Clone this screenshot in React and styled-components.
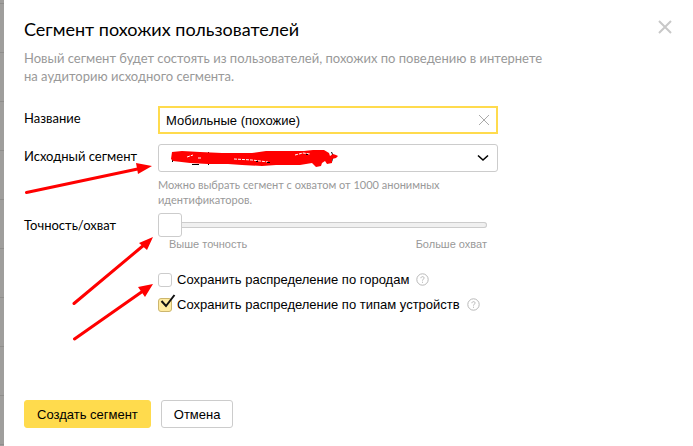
import React, { useState } from 'react';
import styled, { createGlobalStyle } from 'styled-components';

const GlobalStyle = createGlobalStyle`
  * {
    box-sizing: border-box;
  }

  body {
    margin: 0;
    background: #fff;
    color: #000;
    font-family: Lato, 'Noto Sans', sans-serif;
    font-size: 13px;
  }

  button, input, select {
    font-family: 'Liberation Sans', Arial, sans-serif;
    font-size: 13px;
    color: #000;
  }
`;

const Page = styled.div`
  position: relative;
  display: flex;
  min-height: 100vh;
`;

const Backdrop = styled.div`
  flex: 0 0 4px;
  background: repeating-linear-gradient(
    #9f9e9c 0, #9f9e9c 3px, #8f8e8c 3px, #8f8e8c 4px, #9f9e9c 4px, #9f9e9c 49px
  );
`;

const Dialog = styled.main`
  flex: 1;
  min-width: 0;
  display: flex;
  flex-direction: column;
  padding: 16px 21px 18px 20px;
`;

const Header = styled.header`
  display: flex;
  justify-content: space-between;
  align-items: flex-start;
`;

const Title = styled.h1`
  margin: 0;
  font-size: 18px;
  line-height: 26px;
  font-weight: 400;
`;

const IconButton = styled.button`
  display: flex;
  padding: 0;
  border: none;
  background: transparent;
  color: ${props => props.$color};
  cursor: pointer;
`;

const CloseButton = styled(IconButton)`
  margin: 4px 0 0;
`;

const Description = styled.p`
  max-width: 530px;
  margin: 7px 0 0;
  line-height: 18px;
  color: #999;
`;

const Form = styled.form`
  flex: 1;
  display: flex;
  flex-direction: column;
`;

const Fields = styled.div`
  display: grid;
  grid-template-columns: 134px minmax(0, 340px);
  margin-top: 21px;
`;

const Label = styled.label`
  line-height: 24px;
`;

const Field = styled.div`
  position: relative;
  margin-bottom: ${props => props.$gap}px;
`;

const InputBox = styled.div`
  display: flex;
  align-items: center;
  height: 28px;
  padding: 0 6px;
  border: 2px solid #ffdb4d;
`;

const TextInput = styled.input`
  flex: 1;
  min-width: 0;
  padding: 0;
  border: none;
  outline: none;
  background: transparent;
`;

const SelectBox = styled.div`
  position: relative;
`;

const Select = styled.select`
  display: block;
  width: 100%;
  height: 28px;
  padding: 0 30px 0 12px;
  border: 1px solid #ccc;
  border-radius: 3px;
  background: #fff;
  appearance: none;
`;

const SelectArrow = styled.svg`
  position: absolute;
  top: 10px;
  right: 9px;
  pointer-events: none;
`;

const Scribble = styled.svg`
  position: absolute;
  top: 6px;
  left: 12px;
  pointer-events: none;
`;

const Hint = styled.p`
  margin: 5px 0 0;
  font-size: 11px;
  line-height: 15px;
  color: #999;
`;

const Slider = styled.input`
  display: block;
  width: 100%;
  max-width: 329px;
  height: 24px;
  margin: 0;
  appearance: none;
  background: transparent;

  &::-webkit-slider-runnable-track {
    height: 6px;
    border-radius: 3px;
    background: #f0f0f0;
    box-shadow: inset 0 0 0 1px #ccc;
  }

  &::-webkit-slider-thumb {
    width: 24px;
    height: 24px;
    margin-top: -9px;
    border: 1px solid #ccc;
    border-radius: 3px;
    background: #fff;
    appearance: none;
  }
`;

const SliderCaptions = styled.div`
  display: flex;
  justify-content: space-between;
  max-width: 329px;
  padding-left: 11px;
  font-family: 'Liberation Sans', Arial, sans-serif;
  font-size: 11px;
  line-height: 14px;
  color: #999;
`;

const Options = styled.div`
  grid-column: 2;
  display: flex;
  flex-direction: column;
  font-family: 'Liberation Sans', Arial, sans-serif;
`;

const Option = styled.div`
  display: flex;
  align-items: center;
  height: 25px;
  white-space: nowrap;
`;

const CheckLabel = styled.label`
  position: relative;
  display: flex;
  align-items: center;
  gap: 5px;
  margin-right: 7px;
`;

const Checkbox = styled.input`
  width: 14px;
  height: 14px;
  margin: 0;
  border: 1px solid #ccc;
  border-radius: 3px;
  background: #fff;
  appearance: none;

  &:checked {
    border-color: #ccb66e;
    background: #ffeba0;
  }
`;

const CheckMark = styled.svg`
  position: absolute;
  top: -3px;
  left: 2px;
  pointer-events: none;
`;

const Footer = styled.footer`
  display: flex;
  gap: 10px;
  margin-top: auto;
`;

const Button = styled.button`
  height: 28px;
  padding: 0 12px;
  border: 1px solid ${props => (props.$primary ? '#ffdb4d' : '#ccc')};
  border-radius: 3px;
  background: ${props => (props.$primary ? '#ffdb4d' : '#fff')};
  cursor: pointer;
`;

const Arrows = styled.svg`
  position: absolute;
  top: 0;
  left: 0;
  pointer-events: none;
`;

function Cross({ size, width }) {
  return (
    <svg width={size} height={size} viewBox={`0 0 ${size} ${size}`} fill='none' stroke='currentColor' strokeWidth={width}>
      <path d={`M1 1L${size - 1} ${size - 1}M${size - 1} 1L1 ${size - 1}`} />
    </svg>
  );
}

function Help() {
  return (
    <IconButton type='button' aria-label='Справка' $color='#b8b8b8'>
      <svg width='13' height='13' viewBox='0 0 13 13' fill='none' stroke='currentColor'>
        <circle cx='6.5' cy='6.5' r='5.7' />
        <path d='M4.9 5.2C4.9 3.1 8.2 3.2 8.1 5.1C8 6.2 6.5 6.2 6.5 7.6M6.5 8.7V9.8' />
      </svg>
    </IconButton>
  );
}

function CheckOption({ checked, onChange, children }) {
  return (
    <Option>
      <CheckLabel>
        <Checkbox type='checkbox' checked={checked} onChange={e => onChange(e.target.checked)} />
        {checked && (
          <CheckMark width='16' height='15' viewBox='0 0 16 15' fill='none' stroke='#111' strokeWidth='2'>
            <path d='M1.5 7L6 12L14.5 1' />
          </CheckMark>
        )}
        {children}
      </CheckLabel>
      <Help />
    </Option>
  );
}

function App() {
  const [name, setName] = useState('Мобильные (похожие)');
  const [accuracy, setAccuracy] = useState(0);
  const [byCity, setByCity] = useState(false);
  const [byDevice, setByDevice] = useState(true);

  return (
    <Page>
      <GlobalStyle />
      <Backdrop />

      <Dialog>
        <Header>
          <Title>Сегмент похожих пользователей</Title>
          <CloseButton type='button' aria-label='Закрыть' $color='#c8c8c8'>
            <Cross size={14} width={2} />
          </CloseButton>
        </Header>
        <Description>
          Новый сегмент будет состоять из пользователей, похожих по поведению в интернете на аудиторию исходного сегмента.
        </Description>

        <Form onSubmit={e => e.preventDefault()}>
          <Fields>
            <Label htmlFor='name'>Название</Label>
            <Field $gap={10}>
              <InputBox>
                <TextInput id='name' value={name} onChange={e => setName(e.target.value)} />
                <IconButton type='button' aria-label='Очистить' $color='#aaa' onClick={() => setName('')}>
                  <Cross size={12} width={1} />
                </IconButton>
              </InputBox>
            </Field>

            <Label htmlFor='source'>Исходный сегмент</Label>
            <Field $gap={6}>
              <SelectBox>
                <Select id='source'>
                  <option value='' />
                </Select>
                <SelectArrow width='12' height='8' viewBox='0 0 12 8' fill='none' stroke='#000' strokeWidth='1.6'>
                  <path d='M1 1.5L6 6L11 1.5' />
                </SelectArrow>
                <Scribble width='170' height='18' viewBox='0 0 170 18'>
                  <path stroke='#000' d='M2.5 2V12M22 14.5H29M38.5 2V4M38.5 12V15M161.5 2C163 4 163 9 161.5 12' fill='none' />
                  <path
                    fill='#f00'
                    d='M2 2L12 1L30 2L52 3L82 3L96 1L134 1L143 0L154 0L159 3L160 6L163 4L166 5L168 6L166 8L162 9L162 13L157 14L155 11L152 13L151 16L146 17L142 13L130 15L106 15L92 16L72 15L58 14L38 14L20 13L3 11L1 9Z'
                  />
                  <path stroke='#fff' d='M17 7L23 5M28 8H32M64 9L82 10L98 12M125 5L133 3L140 4' strokeDasharray='3 1' fill='none' />
                  <path stroke='#000' d='M97 12.5H100M86 11.5H88M136 4.5H138' />
                </Scribble>
              </SelectBox>
              <Hint>Можно выбрать сегмент с охватом от 1000 анонимных идентификаторов.</Hint>
            </Field>

            <Label htmlFor='accuracy'>Точность/охват</Label>
            <Field $gap={16}>
              <Slider id='accuracy' type='range' value={accuracy} onChange={e => setAccuracy(e.target.value)} />
              <SliderCaptions>
                <span>Выше точность</span>
                <span>Больше охват</span>
              </SliderCaptions>
            </Field>

            <Options>
              <CheckOption checked={byCity} onChange={setByCity}>Сохранить распределение по городам</CheckOption>
              <CheckOption checked={byDevice} onChange={setByDevice}>Сохранить распределение по типам устройств</CheckOption>
            </Options>
          </Fields>

          <Footer>
            <Button type='submit' $primary>Создать сегмент</Button>
            <Button type='button'>Отмена</Button>
          </Footer>
        </Form>
      </Dialog>

      <Arrows width='160' height='350' viewBox='0 0 160 350' fill='#f00' stroke='#f00' strokeWidth='3' strokeLinecap='round' aria-hidden='true'>
        <path d='M26.5 192.5L140 168.5M74 303.5L144 245M74.5 339L143 291' />
        <path stroke='none' d='M152 166L136 163L138 174ZM153 237L139 243L147 250ZM153 284L138 287L145 297Z' />
      </Arrows>
    </Page>
  );
}

export default App;
